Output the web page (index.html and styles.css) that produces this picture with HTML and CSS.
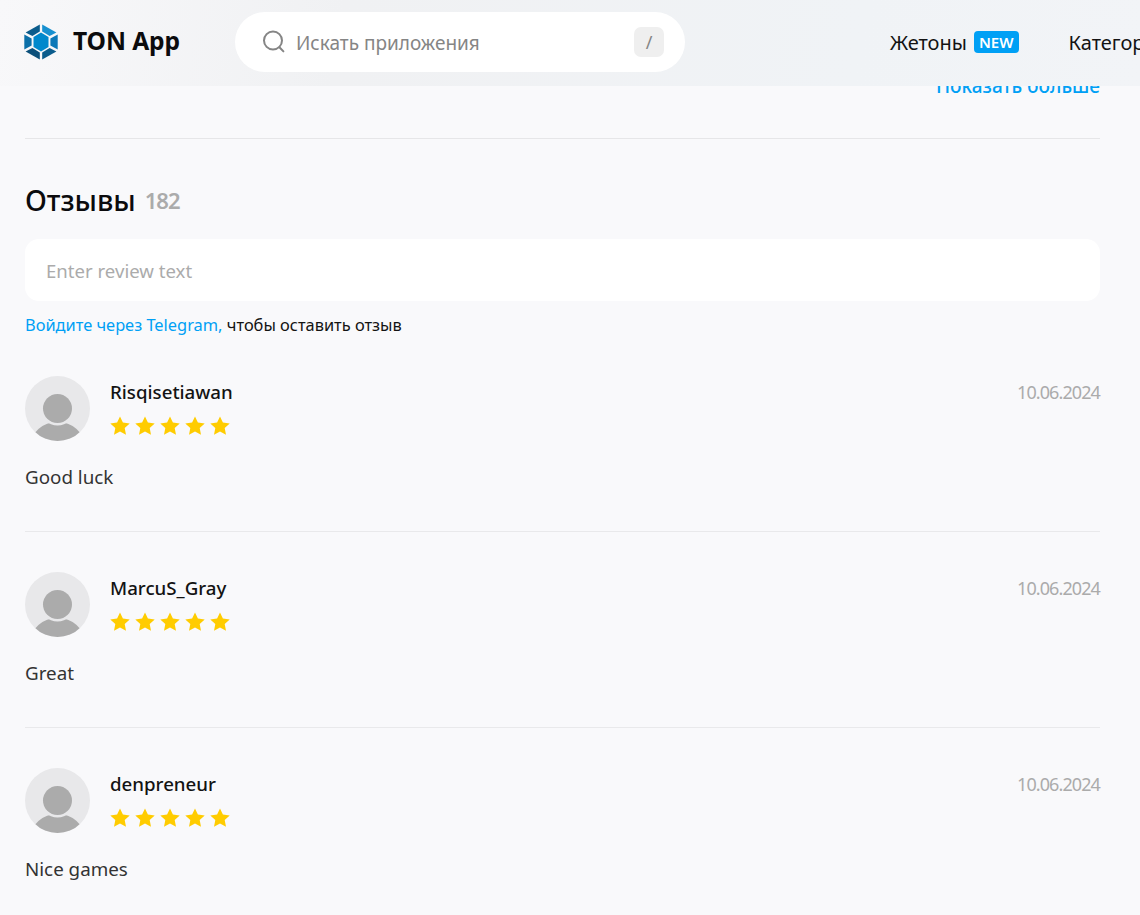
FILE: index.html
```html
<!DOCTYPE html>
<html lang="ru">
<head>
<meta charset="utf-8">
<title>TON App</title>
<link rel="stylesheet" href="styles.css">
</head>
<body>
<header class="topbar">
  <a class="brand">
    <svg class="brand-logo" viewBox="0 0 34 36" width="34" height="36">
      <path fill="#0088cc" d="M17 8.5 24.5 13V23L17 27.5 9.5 23V13Z"/>
      <path fill="#1790d0" d="M18.2 .4 32.4 8.4 25.6 12 18.2 7.6Z"/>
      <path fill="#0b5c8c" d="M15.8 .4 1.6 8.4 8.4 12 15.8 7.6Z"/>
      <path fill="#0b6fa8" d="M.3 10.5 7.6 14.4V21.6L.3 25.5Z"/>
      <path fill="#0b78b8" d="M33.7 10.5 26.4 14.4V21.6L33.7 25.5Z"/>
      <path fill="#0b4f7a" d="M15.8 35.6 1.6 27.6 8.4 24 15.8 28.4Z"/>
      <path fill="#0b5c8c" d="M18.2 35.6 32.4 27.6 25.6 24 18.2 28.4Z"/>
    </svg>
    <span class="brand-name">TON App</span>
  </a>
  <div class="search">
    <svg class="search-icon" viewBox="0 0 24 24" width="24" height="24">
      <circle cx="11" cy="10.5" r="9" fill="none" stroke="#858585" stroke-width="2"/>
      <path d="M17.4 17.2 21.4 21.4" fill="none" stroke="#858585" stroke-width="2" stroke-linecap="round"/>
    </svg>
    <span class="search-text">Искать приложения</span>
    <span class="search-key">/</span>
  </div>
  <nav class="nav">
    <a class="nav-item">Жетоны <span class="badge">NEW</span></a>
    <a class="nav-item">Категории</a>
  </nav>
</header>
<main class="content">
  <div class="more-row"><a class="more">Показать больше</a></div>
  <hr class="rule">
  <h2 class="title">Отзывы <span class="count">182</span></h2>
  <div class="review-input">Enter review text</div>
  <p class="login"><a class="login-link">Войдите через Telegram,</a> чтобы оставить отзыв</p>
  <ul class="reviews">
    <li class="review">
      <div class="review-head">
        <svg class="avatar" viewBox="0 0 65 65" width="65" height="65"><use href="#avatar"/></svg>
        <div class="who">
          <div class="name">Risqisetiawan</div>
          <div class="stars"><svg viewBox="0 0 125 20" width="125" height="20"><use href="#five"/></svg></div>
        </div>
        <time class="date">10.06.2024</time>
      </div>
      <p class="text">Good luck</p>
    </li>
    <li class="review">
      <div class="review-head">
        <svg class="avatar" viewBox="0 0 65 65" width="65" height="65"><use href="#avatar"/></svg>
        <div class="who">
          <div class="name">MarcuS_Gray</div>
          <div class="stars"><svg viewBox="0 0 125 20" width="125" height="20"><use href="#five"/></svg></div>
        </div>
        <time class="date">10.06.2024</time>
      </div>
      <p class="text">Great</p>
    </li>
    <li class="review">
      <div class="review-head">
        <svg class="avatar" viewBox="0 0 65 65" width="65" height="65"><use href="#avatar"/></svg>
        <div class="who">
          <div class="name">denpreneur</div>
          <div class="stars"><svg viewBox="0 0 125 20" width="125" height="20"><use href="#five"/></svg></div>
        </div>
        <time class="date">10.06.2024</time>
      </div>
      <p class="text">Nice games</p>
    </li>
  </ul>
</main>
<svg class="defs" width="0" height="0">
  <defs>
    <clipPath id="disc"><circle cx="32.5" cy="32.5" r="32.5"/></clipPath>
    <g id="avatar">
      <circle cx="32.5" cy="32.5" r="32.5" fill="#e8e8ea"/>
      <g clip-path="url(#disc)">
        <ellipse cx="32.5" cy="70" rx="27" ry="24" fill="#ababab"/>
        <circle cx="32.5" cy="32.5" r="17" fill="#e8e8ea"/>
        <circle cx="32.5" cy="32.5" r="14.5" fill="#ababab"/>
      </g>
    </g>
    <path id="star" fill="#ffcc00" d="M10 .4 12.9 6.6 19.7 7.4 14.7 12 16 18.8 10 15.5 4 18.8 5.3 12 .3 7.4 7.1 6.6Z"/>
    <g id="five">
      <use href="#star" x="0"/><use href="#star" x="25"/><use href="#star" x="50"/><use href="#star" x="75"/><use href="#star" x="100"/>
    </g>
  </defs>
</svg>
</body>
</html>
```
FILE: styles.css
```css
* { box-sizing: border-box; }
html, body { margin: 0; height: 915px; overflow: hidden; }
body {
  background: #f9f9fb;
  color: #131313;
  font-family: "Noto Sans", "Open Sans", "Liberation Sans", sans-serif;
  position: relative;
}
.defs { position: absolute; }
a { text-decoration: none; }
.topbar {
  position: absolute;
  inset: 0 0 auto 0;
  height: 86px;
  z-index: 2;
  display: flex;
  align-items: center;
  padding: 0 0 0 24px;
  background: linear-gradient(100deg, #f8f8fa 0%, #f0f1f3 30%, #f0f3f6 75%, #f2f4f7 100%);
  white-space: nowrap;
}
.brand { display: flex; align-items: center; gap: 15px; width: 211px; flex: none; margin-top: -2px; }
.brand-logo { display: block; flex: none; }
.brand-name { font-size: 24.6px; font-weight: 700; color: #0b0b0d; letter-spacing: -.1px; margin-top: -3px; }
.search {
  width: 450px;
  height: 60px;
  flex: none;
  background: #fff;
  border-radius: 30px;
  display: flex;
  align-items: center;
  padding: 0 21px 0 27px;
  margin-top: -2px;
}
.search-icon { flex: none; margin-right: 10px; }
.search-text { flex: 1; font-size: 19px; color: #858585; padding-top: 2px; }
.search-key {
  width: 30px; height: 30px; border-radius: 7px;
  background: #efefef; color: #858585; font-size: 18px;
  display: flex; align-items: center; justify-content: center;
}
.nav { display: flex; gap: 50px; margin-left: 205px; flex: none; margin-top: -2px; }
.nav-item { font-size: 20px; color: #131313; display: flex; align-items: center; gap: 7px; }
.badge {
  background: #00a0f5; color: #fff; font-size: 15px; font-weight: 600;
  border-radius: 4px; height: 22px; padding: 0 5px; display: flex; align-items: center;
}
.content { padding: 76px 40px 0 25px; }
.more-row { display: flex; justify-content: flex-end; height: 20px; }
.more { color: #00a0f5; font-size: 19px; font-weight: 500; line-height: 20px; }
.rule { border: 0; border-top: 1px solid #e6e6e8; margin: 42px 0 0; }
.title { margin: 43px 0 0; height: 36px; font-size: 28.5px; line-height: 36px; font-weight: 500; color: #0b0b0d; display: flex; align-items: center; gap: 9px; }
.count { font-size: 22px; line-height: 36px; font-weight: 600; color: #ababab; letter-spacing: -1px; }
.review-input {
  margin-top: 21px; height: 62px; background: #fff; border-radius: 14px;
  padding: 0 21px; display: flex; align-items: center;
  font-size: 18.6px; color: #ababab;
}
.login { margin: 13px 0 0; font-size: 16.4px; line-height: 22px; color: #131313; }
.login-link { color: #00a0f5; }
.reviews { list-style: none; margin: 0; padding: 0; }
.review { height: 196px; padding-top: 40px; border-bottom: 1px solid #e9e9eb; }
.review:last-child { border-bottom: 0; }
.review-head { display: flex; align-items: flex-start; }
.avatar { display: block; flex: none; }
.who { margin-left: 20px; flex: 1; }
.name { font-size: 18.7px; line-height: 24px; font-weight: 500; margin-top: 4px; }
.stars { margin-top: 12px; height: 20px; }
.stars svg { display: block; }
.date { font-size: 18px; line-height: 24px; color: #ababab; margin-top: 4px; letter-spacing: -.9px; }
.text { margin: 24px 0 0; font-size: 18.8px; line-height: 24px; color: #333; }
```
